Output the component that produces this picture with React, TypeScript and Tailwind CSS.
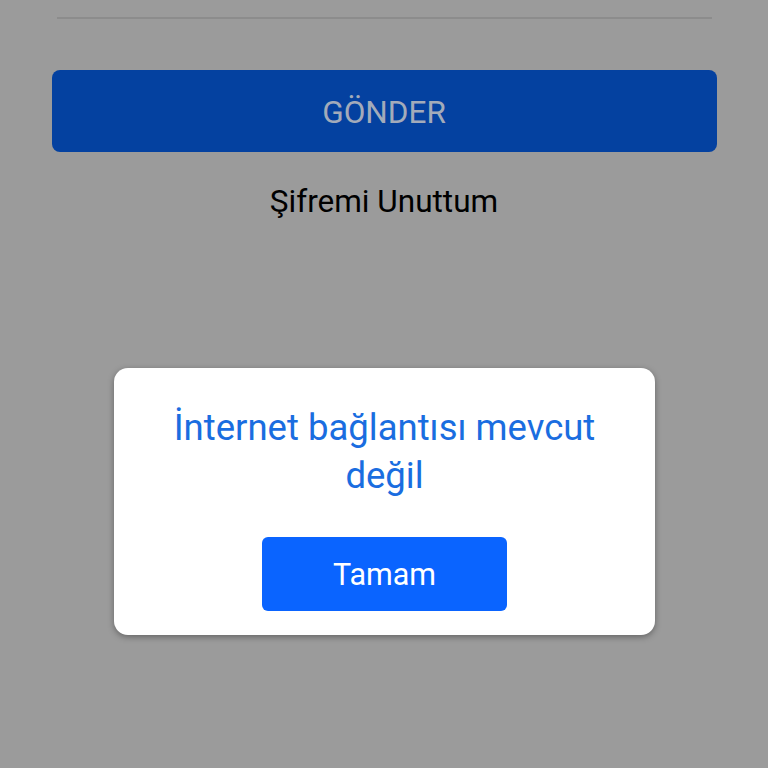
export default function App() {
  return (
    <div className="relative h-[768px] w-[768px] overflow-hidden bg-[#9b9b9b] font-['Roboto',sans-serif]">
      <div className="flex flex-col items-center">
        <div className="mt-[17px] h-[2px] w-[655px] bg-[#8c8c8c]" />
        <button className="mt-[51px] flex h-[82px] w-[665px] items-center justify-center rounded-[8px] bg-[#0441a0] pt-[4px] text-[31.5px] text-[#a3abba]">
          GÖNDER
        </button>
        <p className="mt-[30px] text-[31.5px] leading-[40px] text-black">Şifremi Unuttum</p>
      </div>

      <div className="absolute left-[114px] top-[368px] flex h-[267px] w-[541px] flex-col items-center rounded-[14px] bg-white shadow-[0_2px_6px_rgba(0,0,0,0.35)]">
        <p className="mt-[36px] w-[470px] text-center text-[36.5px] leading-[48px] text-[#1a6de0]">
          İnternet bağlantısı mevcut değil
        </p>
        <button className="mt-[37px] flex h-[74px] w-[245px] items-center justify-center rounded-[6px] bg-[#0a64ff] pt-[2px] text-[30.5px] text-white">
          Tamam
        </button>
      </div>
    </div>
  );
}
